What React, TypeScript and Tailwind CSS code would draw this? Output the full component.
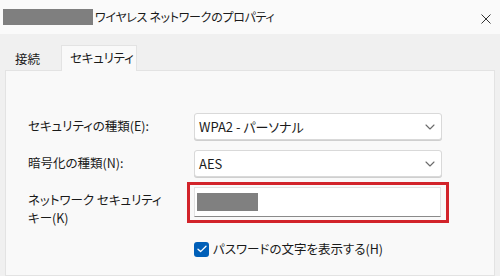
import React from 'react';

const font = "font-['Noto_Sans_CJK_JP','Noto_Sans',sans-serif] [font-feature-settings:'palt']";

const Chevron: React.FC = () => (
    <svg width="10" height="6" viewBox="0 0 10 6" fill="none" className="text-[#6b6b6b]">
        <path d="M1 1l4 4 4-4" stroke="currentColor" strokeWidth="1.1" strokeLinecap="round" strokeLinejoin="round" />
    </svg>
);

const Select: React.FC<{ value: string }> = ({ value }) => (
    <div className="w-[248px] h-[27px] bg-white border border-[#d9d9d9] rounded-[3px] flex items-center justify-between pl-[4px] pr-[6px] shadow-[0_1px_0_#cfcfcf]">
        <span className="text-[13px] text-[#1b1b1b]">{value}</span>
        <Chevron />
    </div>
);

const App: React.FC = () => {
    return (
        <div className={`w-[500px] h-[276px] bg-[#f0f0f0] overflow-hidden flex flex-col ${font}`}>
            <div className="h-[34px] shrink-0 bg-[#fafafa] flex items-center">
                <div className="ml-[3px] w-[90px] h-[16px] bg-[#7f7f7f]" />
                <span className="ml-[2px] text-[12px] tracking-[-0.3px] text-[#1a1a1a] whitespace-nowrap">ワイヤレス ネットワークのプロパティ</span>
                <svg width="10" height="10" viewBox="0 0 10 10" className="ml-auto mr-[9px] mt-[3px]">
                    <path d="M0.5 0.5l9 9M9.5 0.5l-9 9" stroke="#333" strokeWidth="1" />
                </svg>
            </div>

            <div className="flex items-end pl-[8px] pt-[11px] whitespace-nowrap text-[12.5px] text-[#1a1a1a]">
                <div className="w-[53px] h-[22px] flex items-center pl-[7px]">接続</div>
                <div className="w-[76px] h-[26px] -mb-px relative z-10 bg-[#f9f9f9] border border-b-0 border-[#e3e3e3] flex items-center pl-[8px] tracking-[-0.2px]">
                    セキュリティ
                </div>
            </div>

            <div className="mx-[5px] flex-1 bg-[#f9f9f9] border border-[#e3e3e3] pl-[22px] pt-[42px] text-[12.5px] text-[#1a1a1a] whitespace-nowrap">
                <div className="flex items-center">
                    <span className="w-[166px]">セキュリティの種類(E):</span>
                    <Select value="WPA2 - パーソナル" />
                </div>
                <div className="flex items-center mt-[10px]">
                    <span className="w-[166px]">暗号化の種類(N):</span>
                    <Select value="AES" />
                </div>
                <div className="flex items-start mt-[5px]">
                    <div className="w-[159px] mt-[9px] leading-[18px] flex flex-col">
                        <span>ネットワーク セキュリティ</span>
                        <span>キー(K)</span>
                    </div>
                    <div className="w-[262px] h-[41px] border-[3px] border-[#d2232a] pl-[4px] pr-[5px] pt-[2px]">
                        <div className="w-[247px] h-[30px] bg-white border border-[#e2e2e2] border-b-[#8a8a8a] flex items-center pl-[2px]">
                            <div className="w-[61px] h-[18px] bg-[#808080]" />
                        </div>
                    </div>
                </div>
                <div className="flex items-center mt-[13px] ml-[166px]">
                    <div className="w-[15px] h-[15px] rounded-[3px] bg-[#005fb8] flex items-center justify-center">
                        <svg width="10" height="8" viewBox="0 0 10 8" fill="none">
                            <path d="M1 4.2l2.6 2.4L9 1.2" stroke="white" strokeWidth="1.3" strokeLinecap="round" strokeLinejoin="round" />
                        </svg>
                    </div>
                    <span className="ml-[4px]">パスワードの文字を表示する(H)</span>
                </div>
            </div>
        </div>
    );
};

export default App;
